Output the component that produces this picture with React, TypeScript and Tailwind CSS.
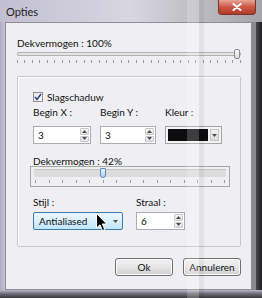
import React from "react";

const ArrowUp = () => (
  <svg width="5" height="3" viewBox="0 0 5 3">
    <path d="M0 3 L2.5 0 L5 3 Z" fill="#4d4d4d" />
  </svg>
);

const ArrowDown = () => (
  <svg width="5" height="3" viewBox="0 0 5 3">
    <path d="M0 0 L2.5 3 L5 0 Z" fill="#4d4d4d" />
  </svg>
);

const Spinner = ({ value, className }: { value: string; className: string }) => (
  <div className={`flex h-[18px] border border-[#abadb3] bg-white ${className}`}>
    <span className="flex-1 pl-[4px] leading-[16px]">{value}</span>
    <div className="flex w-[10px] flex-col gap-px py-px pr-px">
      <div className="flex flex-1 items-center justify-center rounded-[1px] border border-[#c9c9c9] bg-gradient-to-b from-[#f7f7f7] to-[#e2e2e2]">
        <ArrowUp />
      </div>
      <div className="flex flex-1 items-center justify-center rounded-[1px] border border-[#c9c9c9] bg-gradient-to-b from-[#f7f7f7] to-[#e2e2e2]">
        <ArrowDown />
      </div>
    </div>
  </div>
);

const Ticks = ({ count }: { count: number }) => (
  <div className="flex h-[3px] justify-between">
    {Array.from({ length: count }).map((_, i) => (
      <div key={i} className="h-full w-px bg-[#9a9a9a]" />
    ))}
  </div>
);

const App = () => {
  return (
    <div className="relative h-[298px] w-[262px] overflow-hidden bg-[#b8b4c9] font-['Lato',sans-serif] text-[10px] text-[#111]">
      {/* Title bar */}
      <div className="flex h-[22px] bg-gradient-to-r from-[#c3bfd3] via-[#d8d6e0] to-[#a4a3aa]">
        <span className="ml-[6px] mt-[5px] text-[11px] leading-[14px] text-[#222]">Opties</span>
        <div className="ml-auto mr-[6px] flex h-[15px] w-[38px] items-center justify-center rounded-b-[4px] border border-t-0 border-[#7a3128] bg-gradient-to-b from-[#e6a597] via-[#cc5642] to-[#b33a2c]">
          <svg width="10" height="8" viewBox="0 0 10 8">
            <path d="M1.5 1 L8.5 7 M8.5 1 L1.5 7" stroke="#fff" strokeWidth="2" strokeLinecap="round" />
          </svg>
        </div>
      </div>

      <div className="flex h-[268px]">
        <div className="w-[5px] bg-gradient-to-r from-[#aeaac2] to-[#c6c3d6]" />

        {/* Client area */}
        <div className="flex w-[247px] flex-col border border-[#8e8c98] bg-[#efeef2] pl-[11px] pr-[10px] pt-[14px]">
          <div className="leading-[12px]">Dekvermogen : 100%</div>

          <div className="relative flex h-[10px] items-center">
            <div className="h-[4px] w-full rounded-[1px] border border-[#b2b2b2] bg-[#e4e4e4]" />
            <div className="absolute left-[217px] top-0 h-[10px] w-[6px] rounded-[2px] border border-[#8c8c8c] bg-gradient-to-b from-[#fafafa] to-[#dadada]" />
          </div>
          <div className="mt-px">
            <Ticks count={31} />
          </div>

          {/* Group box */}
          <div className="mt-[13px] box-border flex h-[171px] flex-col rounded-[2px] border border-[#c6c6cc] pl-[15px] pt-[14px] shadow-[inset_1px_1px_0_#fff]">
            <div className="flex h-[12px] items-center">
              <div className="flex h-[10px] w-[10px] items-center justify-center border border-[#8e8f8f] bg-gradient-to-br from-[#e4e4e4] to-[#fafafa]">
                <svg width="8" height="8" viewBox="0 0 8 8">
                  <path d="M1 4 L3 6.5 L7 1" fill="none" stroke="#2c4a8c" strokeWidth="1.6" />
                </svg>
              </div>
              <span className="ml-[4px] leading-[12px]">Slagschaduw</span>
            </div>

            <div className="mt-[3px] flex gap-[9px] leading-[13px]">
              <span className="w-[58px]">Begin X :</span>
              <span className="w-[56px]">Begin Y :</span>
              <span className="w-[57px]">Kleur :</span>
            </div>

            <div className="mt-[7px] flex gap-[9px]">
              <Spinner value="3" className="w-[58px]" />
              <Spinner value="3" className="w-[56px]" />
              <div className="flex h-[18px] w-[57px] items-stretch gap-[2px] border border-[#a3a3a3] bg-[#f4f4f4] p-[2px]">
                <div className="flex-1 bg-[#0d0d0f]" />
                <div className="flex w-[9px] items-center justify-center border border-[#c4c4c4] bg-gradient-to-b from-[#f3f3f3] to-[#dcdcdc]">
                  <ArrowDown />
                </div>
              </div>
            </div>

            <div className="mt-[12px] leading-[10px]">Dekvermogen : 42%</div>

            <div className="-ml-[3px] flex h-[21px] w-[200px] flex-col border border-[#a6a6a6] px-[3px] pt-[2px]">
              <div className="relative h-[8px] border-t border-[#c4c4c4] bg-[#dcdcdc]">
                <div className="absolute left-[66px] -top-[2px] h-[10px] w-[6px] rounded-b-[3px] rounded-t-[1px] border border-[#5a8ab8] bg-gradient-to-b from-[#e8f4fc] to-[#a9d3f0]" />
              </div>
              <div className="mt-[3px] px-px">
                <Ticks count={15} />
              </div>
            </div>

            <div className="mt-[9px] flex leading-[12px]">
              <span className="w-[103px]">Stijl :</span>
              <span>Straal :</span>
            </div>

            <div className="mt-[4px] flex gap-[13px]">
              <div className="flex h-[18px] w-[90px] items-center rounded-[2px] border border-[#3d7bad] bg-gradient-to-b from-[#eaf6fd] via-[#d9f0fc] to-[#bee6fd] pl-[5px] pr-[4px]">
                <span className="flex-1">Antialiased</span>
                <ArrowDown />
              </div>
              <Spinner value="6" className="w-[49px]" />
            </div>
          </div>

          <div className="mt-[11px] flex justify-end gap-[10px]">
            <button className="h-[18px] w-[58px] rounded-[3px] border border-[#707070] bg-gradient-to-b from-[#f2f2f2] via-[#e6e6e6] to-[#cfcfcf] leading-[16px] shadow-[inset_0_0_0_1px_#fcfcfc]">
              Ok
            </button>
            <button className="h-[18px] w-[58px] rounded-[3px] border border-[#707070] bg-gradient-to-b from-[#f2f2f2] via-[#e6e6e6] to-[#cfcfcf] leading-[16px] shadow-[inset_0_0_0_1px_#fcfcfc]">
              Annuleren
            </button>
          </div>
        </div>

        <div className="flex w-[10px]">
          <div className="w-[4px] bg-[#8a898f]" />
          <div className="flex-1 bg-gradient-to-r from-[#4a4a4e] to-[#1e1e20]" />
        </div>
      </div>

      <div className="h-[8px] bg-gradient-to-b from-[#bcb8cc] via-[#6a6970] to-[#3a3a3e]" />

      {/* Mouse pointer */}
      <svg className="pointer-events-none absolute left-[96px] top-[213px]" width="12" height="19" viewBox="0 0 12 19">
        <path d="M0.5 0.5 L0.5 15 L4 11.8 L6.5 17.5 L8.8 16.5 L6.3 11 L10.8 11 Z" fill="#000" stroke="#fff" strokeWidth="1" />
      </svg>

      {/* Glass reflection */}
      <div className="pointer-events-none absolute left-[187px] top-0 h-full w-[12px] bg-white/20" />
      <div className="pointer-events-none absolute left-[199px] top-0 h-full w-[5px] bg-black/5" />
    </div>
  );
};

export default App;
